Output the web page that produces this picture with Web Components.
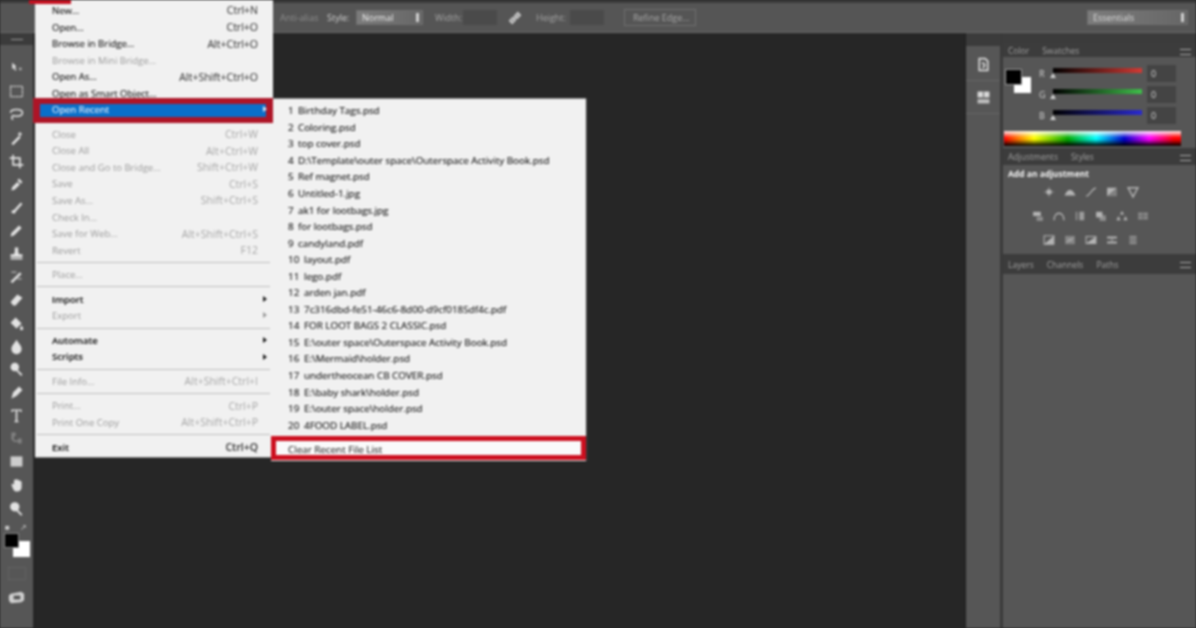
<!DOCTYPE html>
<html>
<head>
<meta charset="utf-8">
<title>Open Recent</title>
<style>
  html, body { margin: 0; height: 100%; background: #262626; overflow: hidden; }
</style>
</head>
<body>
<ps-app>
  <ps-options slot="options"></ps-options>
  <ps-toolbar slot="tools"></ps-toolbar>
  <ps-dock slot="dock"></ps-dock>
  <ps-panels slot="panels"></ps-panels>
  <ps-file-menu slot="menu"></ps-file-menu>
</ps-app>

<script>
 (function() {
   'use strict';

   // tool and panel glyphs, all drawn in a 20x20 box
   const ICONS = {
     move: '<path d="M5 3l5 5-2 .5 2 3-1.500 1-2-3L5 11z"/><path d="M13 9h3v3h-3z" opacity=".6"/>',
     marquee: '<path d="M3 4h14v12H3z" fill="none" stroke="currentColor" stroke-width="1.500" stroke-dasharray="2 1"/>',
     lasso: '<path d="M3 8c0-3 4-4 7-4s7 1 7 4-4 4-7 4c-2 0-3 0-4-1M6 11c-2 1-2 4 0 5" fill="none" stroke="currentColor" stroke-width="1.800"/>',
     wand: '<path d="M4 17l9-9 2 2-9 9z"/><path d="M14 3l1 2 2 1-2 1-1 2-1-2-2-1 2-1z"/>',
     crop: '<path d="M6 2v12h12M2 6h12v12" fill="none" stroke="currentColor" stroke-width="2"/>',
     dropper: '<path d="M4 17l1-4 6-6 3 3-6 6z"/><path d="M11 5l2-2 4 4-2 2z"/>',
     brush: '<path d="M4 16c0-2 1-3 3-3l8-9 2 2-8 9c0 2-2 3-5 1z"/>',
     pencil: '<path d="M3 17l1-4 9-9 3 3-9 9z"/>',
     stamp: '<path d="M8 3h4v5l1 3h4v3H3v-3h4l1-3z"/><path d="M3 15h14v2H3z"/>',
     history: '<path d="M3 16l11-11 2 2L5 18z"/><path d="M4 4h6v1.500H4zM11 12h5v1.500h-5z" opacity=".7"/>',
     eraser: '<path d="M3 13l8-9 6 4-8 9H6z"/>',
     bucket: '<path d="M9 3l7 7-6 6-7-7z"/><path d="M16 12c1 2 2 3 2 4a2 2 0 0 1-4 0c0-1 1-2 2-4z"/>',
     drop: '<path d="M10 2c3 5 6 7 6 11a6 6 0 0 1-12 0c0-4 3-6 6-11z"/>',
     dodge: '<circle cx="8" cy="7" r="5"/><path d="M11 10l6 6-1.500 1.500-6-6z"/>',
     pen: '<path d="M4 17l2-7 7-7 4 4-7 7z"/>',
     type: '<path d="M4 3h12v3h-1.500l-.5-1.500h-3V16l1.500 1v1h-5v-1L9 16V4.500H6L5.500 6H4z"/>',
     path: '<path d="M4 3h5v4H7v5h5v-2h4v6h-4v-2H7l-3-3z" opacity=".55"/>',
     rect: '<path d="M3 4h14v12H3z" opacity=".85"/>',
     hand: '<path d="M4 9c1-2 2-1 3 0V4c1-2 2-1 2 0 0-2 2-2 3 0 1-1 2 0 2 1 1-1 2 0 2 1v6c0 3-2 5-5 5-3 0-4-1-5-3z"/>',
     zoom: '<circle cx="8" cy="8" r="5.500"/><path d="M11 11l6 6-1.500 1.500-6-6z"/>',
     screen: '<path d="M4 6l11-2 3 2v7l-3 2-11 1-2-3V8z"/><path d="M7 8h7v4H7z" fill="#535353"/>',
     layers: '<path d="M5 3h7l3 3v11H5z" fill="none" stroke="currentColor" stroke-width="2"/><path d="M8 9c3-2 5 2 1 5" fill="none" stroke="currentColor" stroke-width="2"/>',
     info: '<path d="M3 3h14v7H3z"/><path d="M3 12h14v5H3z" opacity=".8"/><path d="M9.500 3h1v7h-1z" fill="#535353"/>',
     bright: '<circle cx="10" cy="10" r="4"/><path d="M10 3v2M10 15v2M3 10h2M15 10h2" stroke="currentColor" stroke-width="1.200"/>',
     levels: '<path d="M2 15c3-6 5-8 8-8s5 2 8 8z"/>',
     curves: '<path d="M3 16c6-1 7-10 14-12" fill="none" stroke="currentColor" stroke-width="1.800"/>',
     exposure: '<path d="M3 4h14L3 16z"/><path d="M17 4v12H3z" opacity=".45"/>',
     vibrance: '<path d="M3 4h14l-7 13z" fill="none" stroke="currentColor" stroke-width="2"/>',
     hue: '<path d="M3 4h11v6H3z"/><path d="M8 11h9v6H8z" opacity=".6"/>',
     arch: '<path d="M3 16c0-6 3-10 7-10s7 4 7 10" fill="none" stroke="currentColor" stroke-width="2"/>',
     split: '<path d="M4 4h2v12H4zM9 4h7v12H9z" opacity=".75"/>',
     filter: '<path d="M3 4h9v8H3z"/><path d="M8 9h9v8H8z" opacity=".6"/>',
     mixer: '<path d="M10 3l3 5H7zM5 10l3 6H2zM15 10l3 6h-6z"/>',
     lookup: '<path d="M3 5h14v10H3z" opacity=".55"/><path d="M10 5v10M3 10h14" stroke="#535353"/>',
     invert: '<path d="M3 4h14v12H3z" fill="none" stroke="currentColor" stroke-width="1.500"/><path d="M3 16L17 4v12z"/>',
     poster: '<path d="M3 4h14v12H3z" opacity=".5"/><path d="M6 13l3-4 2 2 3-4" fill="none" stroke="currentColor" stroke-width="1.500"/>',
     thresh: '<path d="M3 5h14v10H3z" fill="none" stroke="currentColor" stroke-width="1.500"/><path d="M3 15L17 5v10z"/>',
     gradmap: '<path d="M3 5h14v3H3zM3 12h14v3H3z"/><path d="M9 8h2v4H9z" opacity=".7"/>',
     selcolor: '<path d="M5 4h10v12H5z" opacity=".6"/><path d="M5 8h10M5 12h10" stroke="#535353"/>'
   };

   const icon = (name, size) =>
     `<svg viewBox="0 0 20 20" width="${size}" height="${size}" fill="currentColor">${ICONS[name] || ''}</svg>`;

   class PsApp extends HTMLElement {
     constructor() {
       super();
       this.attachShadow({ mode: 'open' }).innerHTML = `
         <style>
           :host { display: block; position: relative; width: 1196px; height: 628px; overflow: hidden;
                   font-family: "Open Sans", "Liberation Sans", sans-serif; filter: blur(.8px); }
           .frame { display: grid; grid-template-columns: 34px 1fr 38px 193px;
                    grid-template-rows: 33px 1fr; height: 100%; background: #262626; }
           .options { grid-column: 1 / -1; }
           .canvas { background: #262626; margin-top: 4px; border-left: 1px solid #1f1f1f; }
           ::slotted([slot=menu]) { position: absolute; left: 35px; top: 0; }
         </style>
         <div class="frame">
           <div class="options"><slot name="options"></slot></div>
           <slot name="tools"></slot>
           <div class="canvas"></div>
           <slot name="dock"></slot>
           <slot name="panels"></slot>
         </div>
         <slot name="menu"></slot>`;
     }
   }

   class PsOptions extends HTMLElement {
     constructor() {
       super();
       this.attachShadow({ mode: 'open' }).innerHTML = `
         <style>
           :host { display: flex; align-items: center; height: 33px; box-sizing: border-box;
                   background: #555; border-top: 3px solid #3a3a3a; border-bottom: 1px solid #6a6a6a;
                   color: #d0d0d0; font-size: 9px; padding-left: 280px; }
           span { white-space: nowrap; }
           .dim { color: #8e8e8e; width: 47px; }
           .select { display: flex; justify-content: space-between; align-items: center; box-sizing: border-box;
                     height: 15px; padding: 0 3px 0 5px; color: #eee;
                     background: linear-gradient(90deg, #7c7c7c, #666); border: 1px solid #6e6e6e; }
           .select i { width: 3px; height: 9px; background: #cfcfcf; }
           .field { width: 34px; height: 15px; background: #4a4a4a; }
           .swap { display: flex; color: #c4c4c4; margin: 0 14px 0 11px; }
           .button { box-sizing: border-box; width: 72px; height: 17px; line-height: 15px; padding-left: 8px;
                     border: 1px solid #6f6f6f; color: #a8a8a8; margin-left: 20px; }
           .end { margin-left: auto; margin-right: 8px; width: 101px; color: #ddd; }
         </style>
         <span class="dim">Anti-alias</span>
         <span style="width:29px">Style:</span>
         <span class="select" style="width:67px">Normal<i></i></span>
         <span style="margin-left:12px;width:28px;color:#a4a4a4">Width:</span>
         <span class="field"></span>
         <span class="swap"><svg viewBox="0 0 20 20" width="14" height="14" fill="none" stroke="currentColor" stroke-width="3"><path d="M3 14l3 3 4-4-3-3zM10 7l3 3 4-4-3-3z"/><path d="M8 12l4-4" stroke-width="2"/></svg></span>
         <span style="width:34px;color:#a4a4a4">Height:</span>
         <span class="field"></span>
         <span class="button">Refine Edge...</span>
         <span class="select end">Essentials<i></i></span>`;
     }
   }

   class PsTool extends HTMLElement {
     constructor() {
       super();
       const name = this.getAttribute('name');
       this.attachShadow({ mode: 'open' }).innerHTML = `
         <style>
           :host { display: flex; align-items: center; justify-content: center; height: 23.150px; color: #e2e2e2; }
           :host([name=path]) { color: #a8a8a8; }
         </style>
         ${icon(name, 17)}`;
     }
   }

   class PsToolbar extends HTMLElement {
     constructor() {
       super();
       const names = ['move', 'marquee', 'lasso', 'wand', 'crop', 'dropper', 'brush', 'pencil', 'stamp', 'history',
         'eraser', 'bucket', 'drop', 'dodge', 'pen', 'type', 'path', 'rect', 'hand', 'zoom'];
       this.attachShadow({ mode: 'open' }).innerHTML = `
         <style>
           :host { display: flex; flex-direction: column; background: #565656; border-right: 1px solid #2c2c2c;
                   box-sizing: border-box; width: 34px; }
           .head { height: 12px; background: #3b3b3b; display: flex; align-items: center; justify-content: center; }
           .head i { width: 12px; height: 1px; background: #9a9a9a; }
           .tools { padding-top: 12px; margin-left: -1px; }
           .swap { height: 12px; margin-top: 1px; display: flex; justify-content: space-between; color: #ccc;
                   padding: 0 6px 0 5px; font-size: 8px; align-items: center; }
           .swatches { position: relative; height: 27px; margin-top: 1px; }
           .fg, .bg { position: absolute; }
           .bg { left: 13px; top: 7px; width: 17px; height: 16px; background: #fff; }
           .fg { left: 5px; top: 0; width: 13px; height: 13px; background: #000; box-shadow: 0 0 0 1px #888; }
           .mask { display: flex; justify-content: center; margin-top: 6px; }
           .mask i { width: 16px; height: 11px; border: 1px dotted #6e6e6e; }
           .screen { display: flex; justify-content: center; margin-top: 8px; color: #d0d0d0; }
         </style>
         <div class="head"><i></i></div>
         <div class="tools">${names.map(n => `<ps-tool name="${n}"></ps-tool>`).join('')}</div>
         <div class="swap"><span>&#9632;</span><span>&#8599;</span></div>
         <div class="swatches"><div class="bg"></div><div class="fg"></div></div>
         <div class="mask"><i></i></div>
         <div class="screen">${icon('screen', 19)}</div>`;
     }
   }

   class PsMenuItem extends HTMLElement {
     constructor() {
       super();
       const key = this.getAttribute('key') || '';
       const more = this.hasAttribute('more');
       this.attachShadow({ mode: 'open' }).innerHTML = `
         <style>
           :host { display: flex; position: relative; align-items: center; justify-content: space-between;
                   height: 16.550px; padding: 0 15px 0 17px; color: #1c1c1c; white-space: nowrap;
                   -webkit-text-stroke: .15px currentColor; }
           :host([off]) { color: #9a9a9a; -webkit-text-stroke: 0; }
           :host([bold]) { font-weight: 600; }
           .key { color: #444; font-size: 10.500px; }
           :host([off]) .key { color: #a6a6a6; }
           .more { position: absolute; right: 6px; top: 5px; border-left: 4px solid currentColor;
                   border-top: 3px solid transparent; border-bottom: 3px solid transparent; }
           /* the red mark the screenshot's author drew on a row */
           :host([active]) { color: #dbe9f7; z-index: 1; }
           :host([active])::before { content: ""; position: absolute; left: -2px; right: 0; top: -3.500px; bottom: -4.500px;
                   background: #ad1527; z-index: -1; }
           :host([active])::after { content: ""; position: absolute; left: 5px; right: 7px; top: 3px; bottom: 1px;
                   background: #0a6fc9; z-index: -1; }
           :host([boxed]) { color: #333; z-index: 1; }
           :host([boxed])::before { content: ""; position: absolute; inset: -5px 0 -3px 0;
                   background: #fafafa; border: 5px solid #cc0f1f; z-index: -1; }
         </style>
         <span><slot></slot></span>
         <span class="key">${key}</span>
         ${more ? '<span class="more"></span>' : ''}`;
     }
   }

   class PsMenuSep extends HTMLElement {
     constructor() {
       super();
       this.attachShadow({ mode: 'open' }).innerHTML = `
         <style>
           :host { display: flex; align-items: center; height: 8px; padding: 0 3px 0 2px; }
           i { flex: 1; height: 1px; background: #bdbdbd; }
         </style><i></i>`;
     }
   }

   class PsFileMenu extends HTMLElement {
     constructor() {
       super();
       const files = ['Birthday Tags.psd', 'Coloring.psd', 'top cover.psd',
         'D:\\Template\\outer space\\Outerspace Activity Book.psd', 'Ref magnet.psd', 'Untitled-1.jpg',
         'ak1 for lootbags.jpg', 'for lootbags.psd', 'candyland.pdf', 'layout.pdf', 'lego.pdf', 'arden jan.pdf',
         '7c316dbd-fe51-46c6-8d00-d9cf0185df4c.pdf', 'FOR LOOT BAGS 2 CLASSIC.psd',
         'E:\\outer space\\Outerspace Activity Book.psd', 'E:\\Mermaid\\holder.psd', 'undertheocean CB COVER.psd',
         'E:\\baby shark\\holder.psd', 'E:\\outer space\\holder.psd', '4FOOD LABEL.psd'];
       this.attachShadow({ mode: 'open' }).innerHTML = `
         <style>
           :host { display: block; width: 238px; height: 458px; box-sizing: border-box; padding-top: 2.200px;
                   background: #f1f1f1; border-bottom: 1px solid #777; font-size: 9.500px; }
           .mark { position: absolute; left: -6px; top: 0; width: 42px; height: 4px; background: #c40f1f; }
           .sub { position: absolute; left: 236px; top: 98px; width: 315px; height: 363px; box-sizing: border-box;
                  padding-top: 3px; background: #f1f1f1; border-top: 1px solid #8b8b8b; box-shadow: 2px 0 0 #333;
                  font-size: 9.850px; }
           .sub b { font-weight: 400; display: inline-block; min-width: 9px; margin-right: 1px; }
           .sub .two { min-width: 15px; }
         </style>
         <div class="mark"></div>
         <ps-menu-item key="Ctrl+N">New...</ps-menu-item>
         <ps-menu-item key="Ctrl+O">Open...</ps-menu-item>
         <ps-menu-item key="Alt+Ctrl+O">Browse in Bridge...</ps-menu-item>
         <ps-menu-item off>Browse in Mini Bridge...</ps-menu-item>
         <ps-menu-item key="Alt+Shift+Ctrl+O">Open As...</ps-menu-item>
         <ps-menu-item>Open as Smart Object...</ps-menu-item>
         <ps-menu-item active more>Open Recent</ps-menu-item>
         <ps-menu-sep></ps-menu-sep>
         <ps-menu-item off key="Ctrl+W">Close</ps-menu-item>
         <ps-menu-item off key="Alt+Ctrl+W">Close All</ps-menu-item>
         <ps-menu-item off key="Shift+Ctrl+W">Close and Go to Bridge...</ps-menu-item>
         <ps-menu-item off key="Ctrl+S">Save</ps-menu-item>
         <ps-menu-item off key="Shift+Ctrl+S">Save As...</ps-menu-item>
         <ps-menu-item off>Check In...</ps-menu-item>
         <ps-menu-item off key="Alt+Shift+Ctrl+S">Save for Web...</ps-menu-item>
         <ps-menu-item off key="F12">Revert</ps-menu-item>
         <ps-menu-sep></ps-menu-sep>
         <ps-menu-item off>Place...</ps-menu-item>
         <ps-menu-sep></ps-menu-sep>
         <ps-menu-item more bold>Import</ps-menu-item>
         <ps-menu-item more off>Export</ps-menu-item>
         <ps-menu-sep></ps-menu-sep>
         <ps-menu-item more bold>Automate</ps-menu-item>
         <ps-menu-item more bold>Scripts</ps-menu-item>
         <ps-menu-sep></ps-menu-sep>
         <ps-menu-item off key="Alt+Shift+Ctrl+I">File Info...</ps-menu-item>
         <ps-menu-sep></ps-menu-sep>
         <ps-menu-item off key="Ctrl+P">Print...</ps-menu-item>
         <ps-menu-item off key="Alt+Shift+Ctrl+P">Print One Copy</ps-menu-item>
         <ps-menu-sep></ps-menu-sep>
         <ps-menu-item bold key="Ctrl+Q">Exit</ps-menu-item>
         <div class="sub">
           ${files.map((f, i) => `<ps-menu-item><b class="${i > 8 ? 'two' : ''}">${i + 1}</b>${f}</ps-menu-item>`).join('')}
           <ps-menu-sep></ps-menu-sep>
           <ps-menu-item boxed>Clear Recent File List</ps-menu-item>
         </div>`;
     }
   }

   class PsDock extends HTMLElement {
     constructor() {
       super();
       this.attachShadow({ mode: 'open' }).innerHTML = `
         <style>
           :host { display: flex; flex-direction: column; align-items: center; box-sizing: border-box; width: 38px;
                   background: #565656; border-left: 1px solid #1f1f1f; border-right: 3px solid #3a3a3a; color: #d8d8d8; }
           .head { align-self: stretch; height: 13px; background: #3b3b3b; }
           .cell { display: flex; justify-content: center; align-items: center; align-self: stretch; height: 32px;
                   border-bottom: 1px solid #666; }
         </style>
         <div class="head"></div>
         <div class="cell" style="margin-top:2px">${icon('layers', 17)}</div>
         <div class="cell">${icon('info', 17)}</div>`;
     }
   }

   class PsTabs extends HTMLElement {
     constructor() {
       super();
       const tabs = this.getAttribute('tabs').split(',');
       this.attachShadow({ mode: 'open' }).innerHTML = `
         <style>
           :host { display: flex; position: relative; align-items: stretch; background: #3c3c3c; font-size: 8.500px;
                   color: #a0a0a0; height: var(--tab-height, 17px); }
           span { display: flex; align-items: center; padding: 0 8px 0 5px; }
           span:first-child { background: #5a5a5a; color: #ececec; font-weight: 600; }
           i { position: absolute; right: 5px; top: 40%; width: 11px; height: 4px; border-top: 1px solid #aaa; border-bottom: 1px solid #aaa; }
         </style>
         ${tabs.map(t => `<span>${t}</span>`).join('')}<i></i>`;
     }
   }

   class PsSlider extends HTMLElement {
     constructor() {
       super();
       const c = this.getAttribute('color');
       this.attachShadow({ mode: 'open' }).innerHTML = `
         <style>
           :host { display: grid; grid-template-columns: 9px 89px 34px; column-gap: 5px; align-items: center;
                   height: 21px; color: #d4d4d4; font-size: 9px; }
           .track { position: relative; height: 5px; top: -3px; background: linear-gradient(90deg, #000, ${c}); }
           .track::after { content: ""; position: absolute; left: -3px; top: 5px; border: 3px solid transparent;
                           border-bottom: 5px solid #cfcfcf; border-top: 0; }
           .value { box-sizing: border-box; height: 17px; width: 29px; background: #444; padding-left: 4px; line-height: 17px; }
         </style>
         <span>${this.getAttribute('label')}</span>
         <div class="track"></div>
         <div class="value">0</div>`;
     }
   }

   class PsColorPanel extends HTMLElement {
     constructor() {
       super();
       this.attachShadow({ mode: 'open' }).innerHTML = `
         <style>
           :host { display: block; height: 105px; background: #565656; --tab-height: 14px; }
           .body { display: flex; padding: 6px 0 0 3px; height: 65px; box-sizing: border-box; }
           .swatch { position: relative; width: 33px; }
           .fg, .bg { position: absolute; }
           .fg { left: 0; top: 7px; width: 15px; height: 14px; background: #000; box-shadow: 0 0 0 1px #999; }
           .bg { left: 8px; top: 14px; width: 17px; height: 16px; background: #fff; }
           .spectrum { margin: 9px 15px 0 1px; height: 15px; display: flex;
             background:
               linear-gradient(180deg, rgba(255,255,255,.95), rgba(255,255,255,0) 45%, rgba(0,0,0,0) 55%, #000),
               linear-gradient(90deg, #f00, #ff0 17%, #0a0 36%, #0ff 52%, #00c 68%, #f0f 82%, #f00 96%); }
         </style>
         <ps-tabs tabs="Color,Swatches"></ps-tabs>
         <div class="body">
           <div class="swatch"><div class="bg"></div><div class="fg"></div></div>
           <div>
             <ps-slider label="R" color="#d23a34"></ps-slider>
             <ps-slider label="G" color="#3fbf4a"></ps-slider>
             <ps-slider label="B" color="#2a2ad0"></ps-slider>
           </div>
         </div>
         <div class="spectrum"></div>`;
     }
   }

   class PsAdjustPanel extends HTMLElement {
     constructor() {
       super();
       const rows = [
         ['bright', 'levels', 'curves', 'exposure', 'vibrance'],
         ['hue', 'arch', 'split', 'filter', 'mixer', 'lookup'],
         ['invert', 'poster', 'thresh', 'gradmap', 'selcolor']
       ];
       this.attachShadow({ mode: 'open' }).innerHTML = `
         <style>
           :host { display: block; height: 106px; background: #565656; color: #b4b4b4; }
           .title { font-size: 8.500px; font-weight: 700; color: #f4f4f4; padding: 3px 0 0 5px; height: 12px; }
           .row { display: flex; justify-content: center; gap: 7px; height: 24px; align-items: center; width: 175px; }
           .row span { display: flex; }
         </style>
         <ps-tabs tabs="Adjustments,Styles"></ps-tabs>
         <div class="title">Add an adjustment</div>
         ${rows.map(r => `<div class="row">${r.map(n => `<span>${icon(n, 14)}</span>`).join('')}</div>`).join('')}`;
     }
   }

   class PsPanels extends HTMLElement {
     constructor() {
       super();
       this.attachShadow({ mode: 'open' }).innerHTML = `
         <style>
           :host { display: block; background: #565656; width: 193px; }
           .head { height: 10px; background: #3b3b3b; }
           .layers { --tab-height: 20px; }
         </style>
         <div class="head"></div>
         <ps-color-panel></ps-color-panel>
         <ps-adjust-panel></ps-adjust-panel>
         <div class="layers"><ps-tabs tabs="Layers,Channels,Paths"></ps-tabs></div>`;
     }
   }

   customElements.define('ps-app', PsApp);
   customElements.define('ps-options', PsOptions);
   customElements.define('ps-tool', PsTool);
   customElements.define('ps-toolbar', PsToolbar);
   customElements.define('ps-menu-item', PsMenuItem);
   customElements.define('ps-menu-sep', PsMenuSep);
   customElements.define('ps-file-menu', PsFileMenu);
   customElements.define('ps-dock', PsDock);
   customElements.define('ps-tabs', PsTabs);
   customElements.define('ps-slider', PsSlider);
   customElements.define('ps-color-panel', PsColorPanel);
   customElements.define('ps-adjust-panel', PsAdjustPanel);
   customElements.define('ps-panels', PsPanels);
 })();
</script>
</body>
</html>
